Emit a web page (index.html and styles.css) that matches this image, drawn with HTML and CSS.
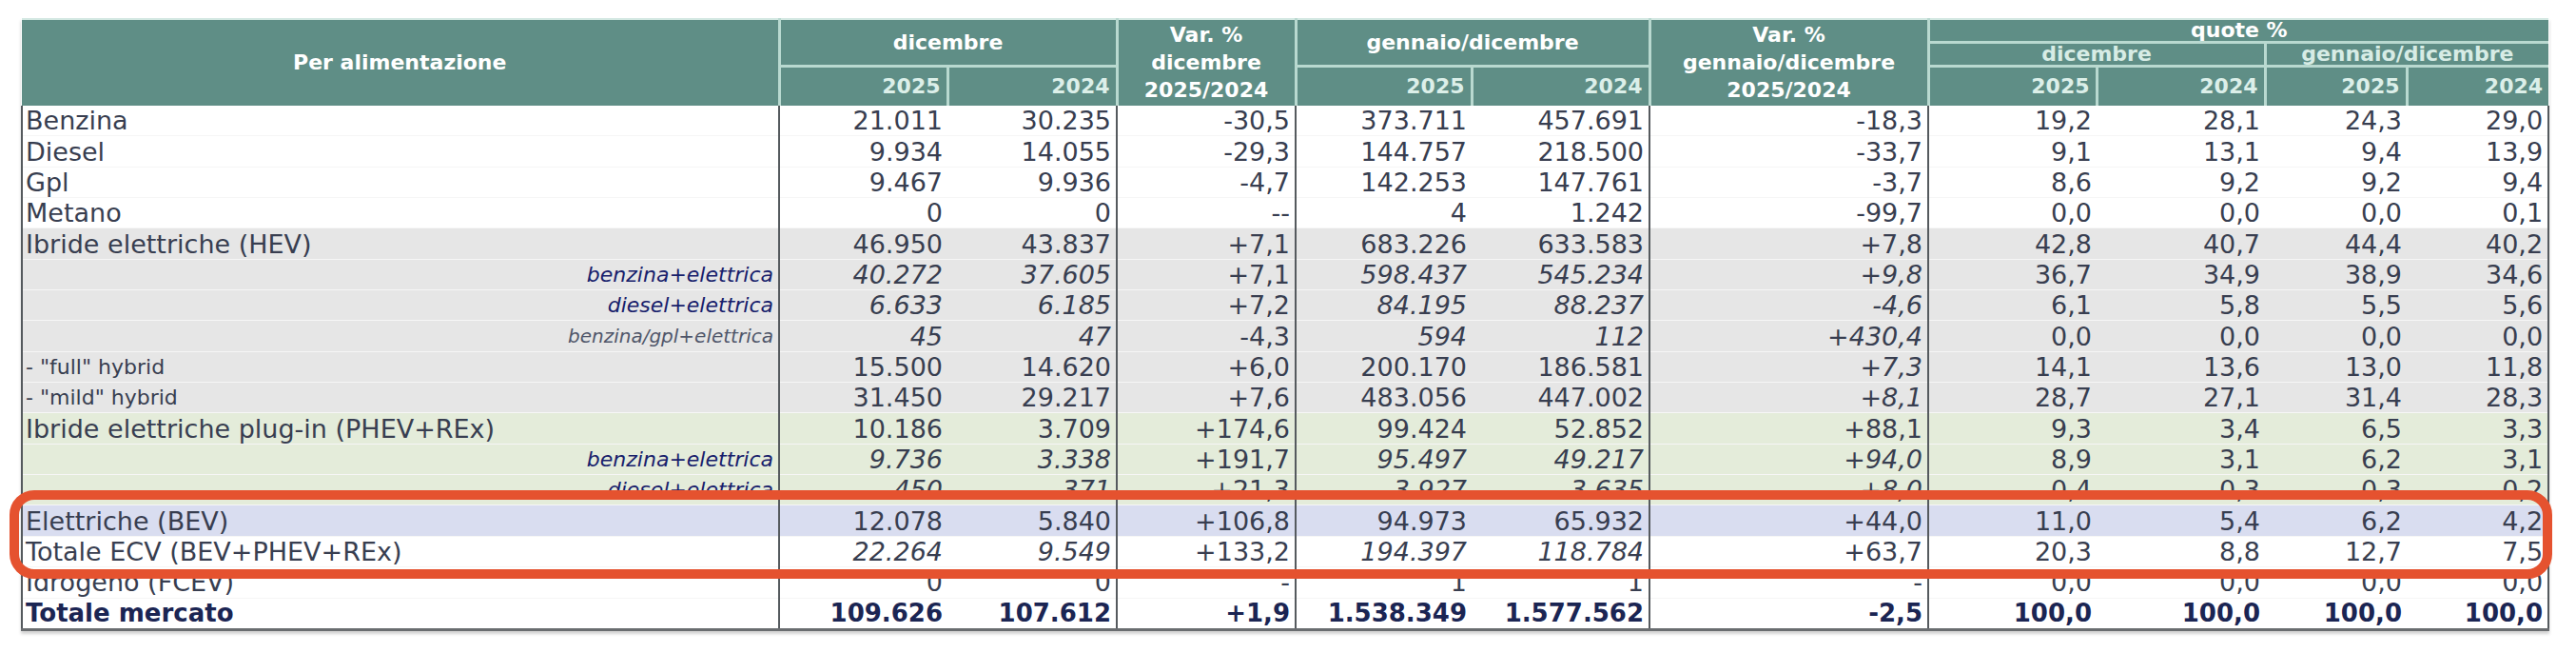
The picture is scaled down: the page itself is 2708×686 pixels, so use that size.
FILE: index.html
```html
<!DOCTYPE html>
<html lang="it">
<head>
<meta charset="utf-8">
<title>Immatricolazioni per alimentazione</title>
<link rel="stylesheet" href="styles.css">
</head>
<body>
<div class="page">
  <table class="stats">
    <colgroup>
      <col class="c-label"><col class="c-d1"><col class="c-d2"><col class="c-v1"><col class="c-g1"><col class="c-g2"><col class="c-v2"><col class="c-q1"><col class="c-q2"><col class="c-q3"><col class="c-q4">
    </colgroup>
    <thead>
      <tr class="h1">
        <th rowspan="3" class="lab">Per alimentazione</th>
        <th colspan="2" rowspan="2" class="grp">dicembre</th>
        <th rowspan="3" class="var">Var. %<br>dicembre<br>2025/2024</th>
        <th colspan="2" rowspan="2" class="grp">gennaio/dicembre</th>
        <th rowspan="3" class="var">Var. %<br>gennaio/dicembre<br>2025/2024</th>
        <th colspan="4" class="grp quote">quote %</th>
      </tr>
      <tr class="h2">
        <th colspan="2" class="grp qsub">dicembre</th>
        <th colspan="2" class="grp qsub">gennaio/dicembre</th>
      </tr>
      <tr class="h3">
        <th class="yr">2025</th><th class="yr">2024</th>
        <th class="yr">2025</th><th class="yr">2024</th>
        <th class="yr">2025</th><th class="yr">2024</th>
        <th class="yr">2025</th><th class="yr">2024</th>
      </tr>
    </thead>
    <tbody>
      <tr><td class="lbl">Benzina</td><td>21.011</td><td>30.235</td><td>-30,5</td><td>373.711</td><td>457.691</td><td>-18,3</td><td>19,2</td><td>28,1</td><td>24,3</td><td>29,0</td></tr>
      <tr><td class="lbl">Diesel</td><td>9.934</td><td>14.055</td><td>-29,3</td><td>144.757</td><td>218.500</td><td>-33,7</td><td>9,1</td><td>13,1</td><td>9,4</td><td>13,9</td></tr>
      <tr><td class="lbl">Gpl</td><td>9.467</td><td>9.936</td><td>-4,7</td><td>142.253</td><td>147.761</td><td>-3,7</td><td>8,6</td><td>9,2</td><td>9,2</td><td>9,4</td></tr>
      <tr><td class="lbl">Metano</td><td>0</td><td>0</td><td>--</td><td>4</td><td>1.242</td><td>-99,7</td><td>0,0</td><td>0,0</td><td>0,0</td><td>0,1</td></tr>
      <tr class="hev"><td class="lbl">Ibride elettriche (HEV)</td><td>46.950</td><td>43.837</td><td>+7,1</td><td>683.226</td><td>633.583</td><td>+7,8</td><td>42,8</td><td>40,7</td><td>44,4</td><td>40,2</td></tr>
      <tr class="hev"><td class="sub">benzina+elettrica</td><td class="i">40.272</td><td class="i">37.605</td><td>+7,1</td><td class="i">598.437</td><td class="i">545.234</td><td class="i">+9,8</td><td>36,7</td><td>34,9</td><td>38,9</td><td>34,6</td></tr>
      <tr class="hev"><td class="sub">diesel+elettrica</td><td class="i">6.633</td><td class="i">6.185</td><td>+7,2</td><td class="i">84.195</td><td class="i">88.237</td><td class="i">-4,6</td><td>6,1</td><td>5,8</td><td>5,5</td><td>5,6</td></tr>
      <tr class="hev"><td class="sub sub2">benzina/gpl+elettrica</td><td class="i">45</td><td class="i">47</td><td>-4,3</td><td class="i">594</td><td class="i">112</td><td class="i">+430,4</td><td>0,0</td><td>0,0</td><td>0,0</td><td>0,0</td></tr>
      <tr class="hev"><td class="lbl small">- "full" hybrid</td><td>15.500</td><td>14.620</td><td>+6,0</td><td>200.170</td><td>186.581</td><td class="i">+7,3</td><td>14,1</td><td>13,6</td><td>13,0</td><td>11,8</td></tr>
      <tr class="hev"><td class="lbl small">- "mild" hybrid</td><td>31.450</td><td>29.217</td><td>+7,6</td><td>483.056</td><td>447.002</td><td class="i">+8,1</td><td>28,7</td><td>27,1</td><td>31,4</td><td>28,3</td></tr>
      <tr class="phev"><td class="lbl">Ibride elettriche plug-in (PHEV+REx)</td><td>10.186</td><td>3.709</td><td>+174,6</td><td>99.424</td><td>52.852</td><td>+88,1</td><td>9,3</td><td>3,4</td><td>6,5</td><td>3,3</td></tr>
      <tr class="phev"><td class="sub">benzina+elettrica</td><td class="i">9.736</td><td class="i">3.338</td><td>+191,7</td><td class="i">95.497</td><td class="i">49.217</td><td class="i">+94,0</td><td>8,9</td><td>3,1</td><td>6,2</td><td>3,1</td></tr>
      <tr class="phev"><td class="sub">diesel+elettrica</td><td class="i">450</td><td class="i">371</td><td>+21,3</td><td class="i">3.927</td><td class="i">3.635</td><td class="i">+8,0</td><td>0,4</td><td>0,3</td><td>0,3</td><td>0,2</td></tr>
      <tr class="bev"><td class="lbl">Elettriche (BEV)</td><td>12.078</td><td>5.840</td><td>+106,8</td><td>94.973</td><td>65.932</td><td>+44,0</td><td>11,0</td><td>5,4</td><td>6,2</td><td>4,2</td></tr>
      <tr><td class="lbl">Totale ECV (BEV+PHEV+REx)</td><td class="i">22.264</td><td class="i">9.549</td><td>+133,2</td><td class="i">194.397</td><td class="i">118.784</td><td>+63,7</td><td>20,3</td><td>8,8</td><td>12,7</td><td>7,5</td></tr>
      <tr><td class="lbl">Idrogeno (FCEV)</td><td>0</td><td>0</td><td>-</td><td>1</td><td>1</td><td>-</td><td>0,0</td><td>0,0</td><td>0,0</td><td>0,0</td></tr>
      <tr class="tot"><td class="lbl">Totale mercato</td><td>109.626</td><td>107.612</td><td>+1,9</td><td>1.538.349</td><td>1.577.562</td><td>-2,5</td><td>100,0</td><td>100,0</td><td>100,0</td><td>100,0</td></tr>
    </tbody>
  </table>
  <div class="highlight"></div>
</div>
</body>
</html>
```
FILE: styles.css
```css
html, body {
  margin: 0;
  padding: 0;
  background: #ffffff;
}

body {
  font-family: "DejaVu Sans", Verdana, sans-serif;
}

.page {
  position: relative;
  padding: 19px 0 0 22px;
  width: 2686px;
  height: 667px;
}

.stats {
  border-collapse: collapse;
  table-layout: fixed;
  width: 2656px;
  box-shadow: 0 3px 3px rgba(0, 0, 0, 0.18);
}

.c-label { width: 796px; }
.c-d1 { width: 177px; }
.c-d2 { width: 178px; }
.c-v1 { width: 188px; }
.c-g1 { width: 185px; }
.c-g2 { width: 187px; }
.c-v2 { width: 293px; }
.c-q1 { width: 177px; }
.c-q2 { width: 177px; }
.c-q3 { width: 149px; }
.c-q4 { width: 149px; }

/* header */
.stats th {
  background: #5f8e86;
  color: #ffffff;
  font-weight: bold;
  font-size: 22px;
  line-height: 29px;
  padding: 0;
  text-align: center;
  vertical-align: middle;
  border-right: 3px solid #b9d9d0;
  white-space: nowrap;
}

.stats thead tr.h1 th {
  border-top: 2px solid #d3e8e2;
}

.stats tr.h1 { height: 24px; }
.stats tr.h2 { height: 23px; }
.stats tr.h3 { height: 41px; }

.stats th.grp {
  border-bottom: 3px solid #b9d9d0;
  line-height: 22px;
}

.stats th.qsub {
  color: #d7ece5;
}

.stats th.yr {
  text-align: right;
  padding-right: 6px;
  color: #dcefe9;
}

.stats th:last-child,
.stats tr.h3 th:last-child {
  border-right: none;
}

/* body */
.stats td {
  font-size: 27px;
  line-height: 31px;
  height: 32.35px;
  padding: 0 5px 0 4px;
  text-align: right;
  color: #383e50;
  white-space: nowrap;
  overflow: hidden;
  box-sizing: border-box;
  border-bottom: 1px solid rgba(0, 0, 0, 0.035);
}

.stats tbody td:first-child {
  border-left: 2px solid #555a5e;
}

.stats tbody td:nth-child(1),
.stats tbody td:nth-child(3),
.stats tbody td:nth-child(4),
.stats tbody td:nth-child(6),
.stats tbody td:nth-child(7),
.stats tbody td:nth-child(11) {
  border-right: 2px solid #555a5e;
}

.stats tbody tr:last-child td {
  border-bottom: 3px solid #6a6d70;
}

.stats td.lbl {
  text-align: left;
  padding-left: 3px;
}

.stats td.small {
  font-size: 22px;
}

.stats td.sub {
  font-style: italic;
  font-size: 22px;
  color: #17206b;
}

.stats td.sub2 {
  font-size: 20px;
  color: #50566a;
}

.stats td.i {
  font-style: italic;
}

.stats tr.hev td { background: #e6e6e6; }
.stats tr.phev td { background: #e4ecda; }
.stats tr.bev td { background: #d9ddf0; }

.stats tr.tot td {
  font-weight: bold;
  color: #1b2553;
  font-size: 26px;
}

/* annotation */
.highlight {
  position: absolute;
  left: 10px;
  top: 515px;
  width: 2673px;
  height: 93px;
  box-sizing: border-box;
  border: 10px solid #e5522f;
  border-radius: 26px;
  pointer-events: none;
}
```
